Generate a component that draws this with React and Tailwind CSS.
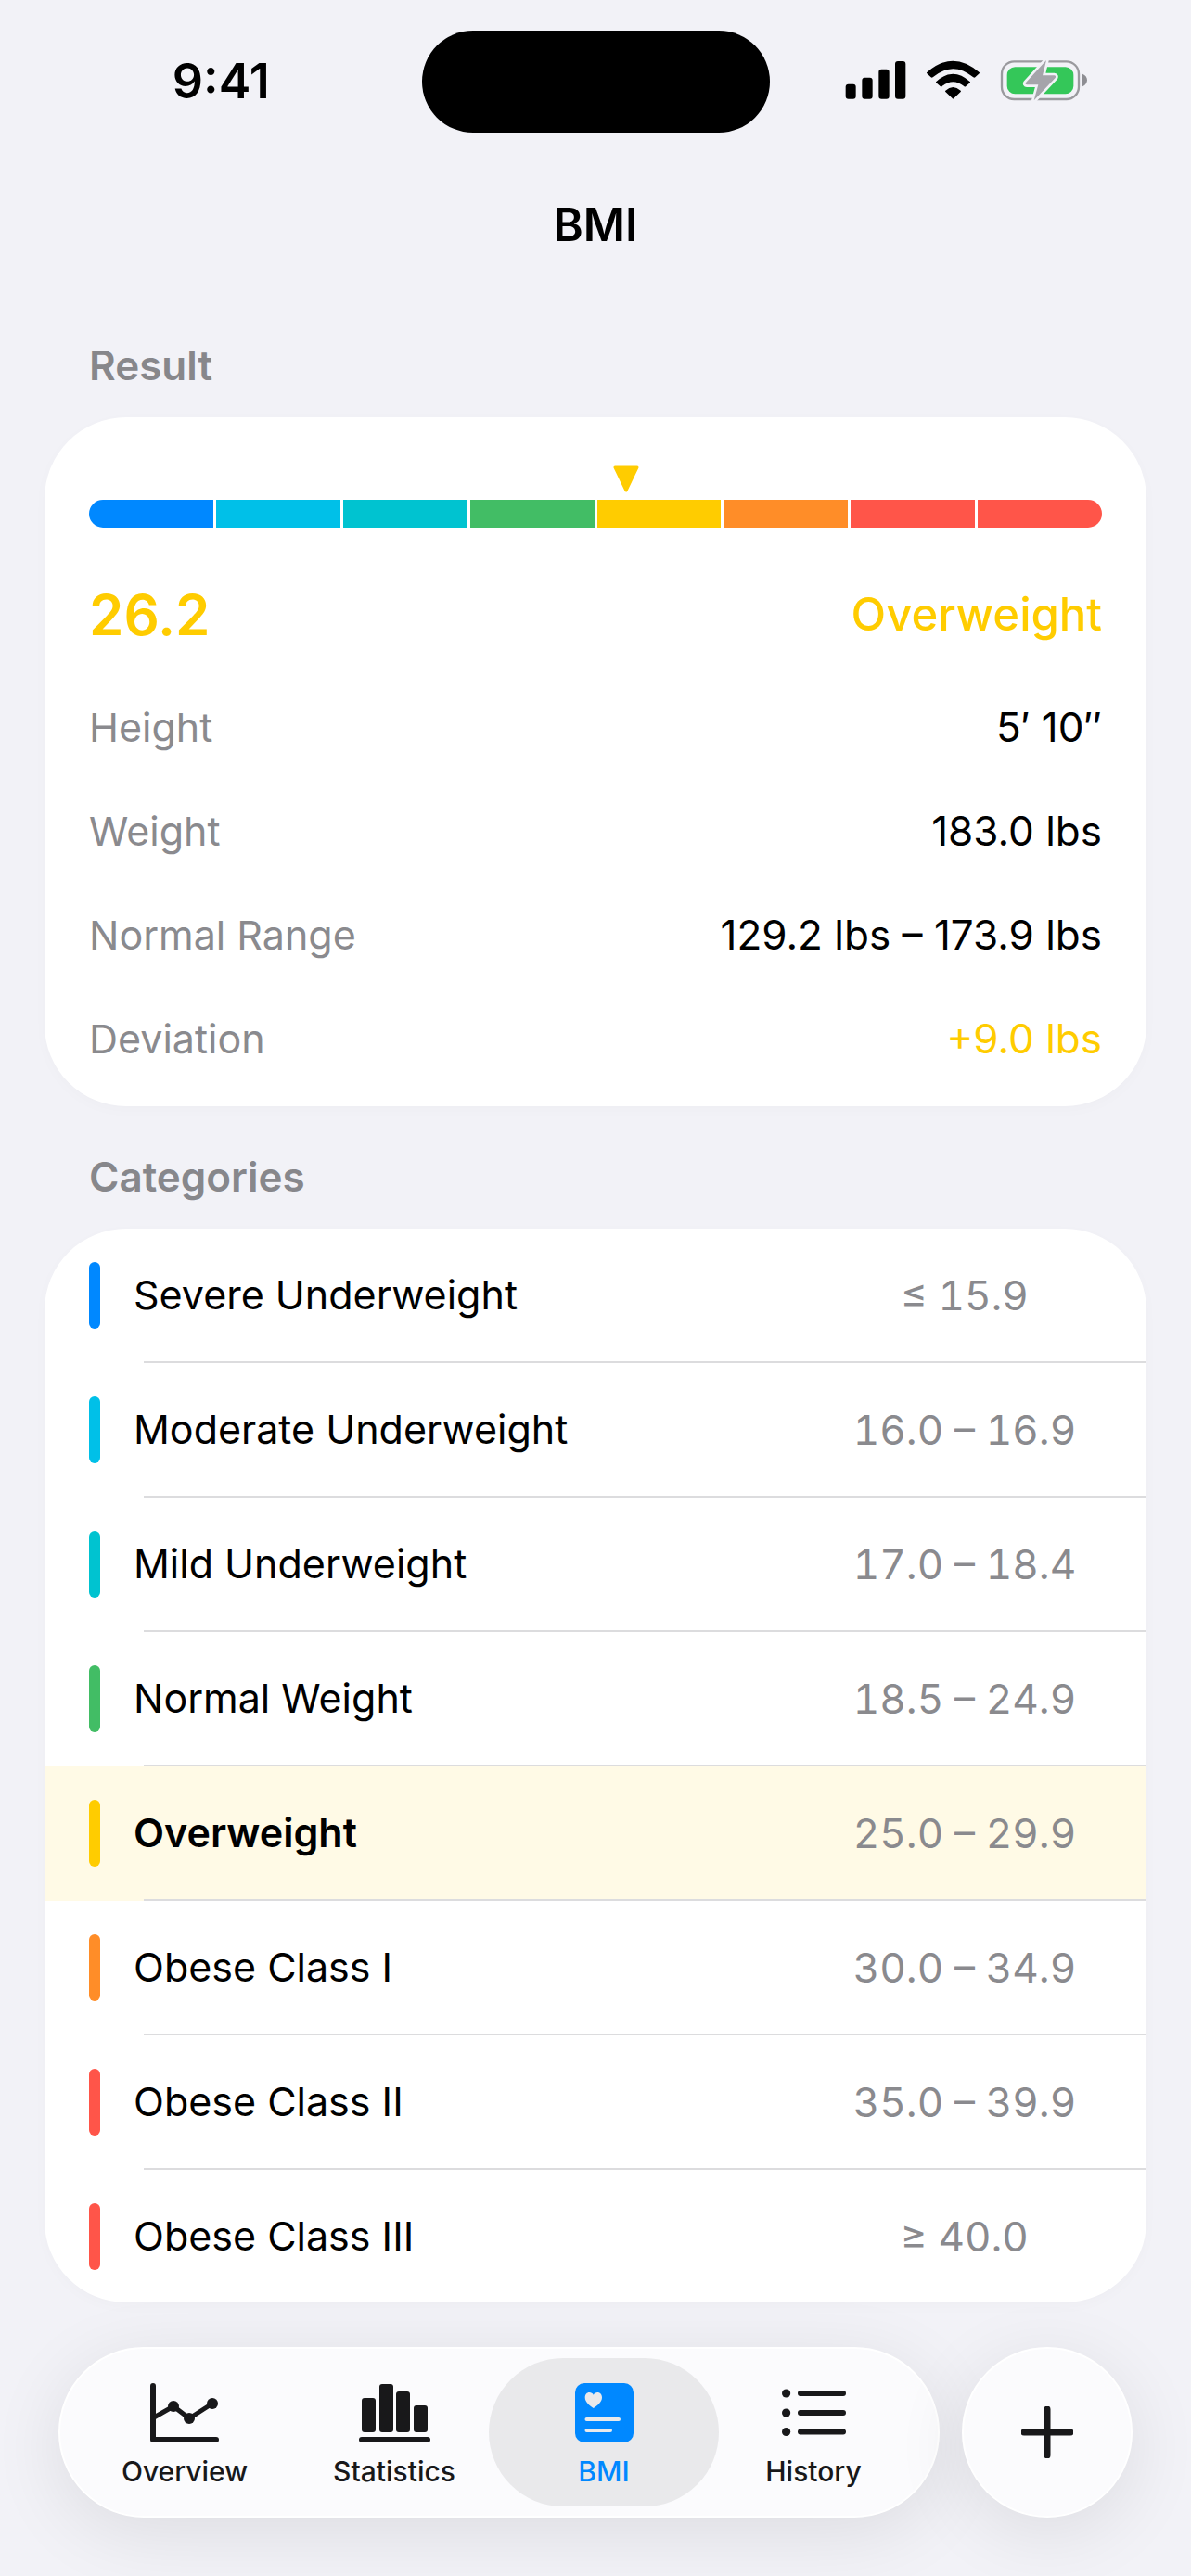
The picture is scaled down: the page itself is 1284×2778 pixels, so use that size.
import React, { useState } from 'react';

const BMI = 26.2;

const CATEGORIES = [
  { name: 'Severe Underweight', range: '≤ 15.9', color: 'bg-[#0088ff]' },
  { name: 'Moderate Underweight', range: '16.0 – 16.9', min: 16, max: 16.9, color: 'bg-[#00c0e8]' },
  { name: 'Mild Underweight', range: '17.0 – 18.4', min: 17, max: 18.4, color: 'bg-[#00c3d0]' },
  { name: 'Normal Weight', range: '18.5 – 24.9', min: 18.5, max: 24.9, color: 'bg-[#42bd65]' },
  { name: 'Overweight', range: '25.0 – 29.9', min: 25, max: 29.9, color: 'bg-[#ffcc00]' },
  { name: 'Obese Class I', range: '30.0 – 34.9', min: 30, max: 34.9, color: 'bg-[#ff8d28]' },
  { name: 'Obese Class II', range: '35.0 – 39.9', min: 35, max: 39.9, color: 'bg-[#ff5549]' },
  { name: 'Obese Class III', range: '≥ 40.0', color: 'bg-[#ff5549]' },
];

const DETAILS = [
  { label: 'Height', value: '5′ 10″' },
  { label: 'Weight', value: '183.0 lbs' },
  { label: 'Normal Range', value: '129.2 lbs – 173.9 lbs' },
  { label: 'Deviation', value: '+9.0 lbs', highlight: true },
];

const SignalIcon = () => (
  <svg viewBox="94 70 198 135" className="w-[66px] h-[45px]" aria-hidden="true">
    <rect x="96" y="150" width="33" height="48" rx="9" />
    <rect x="149" y="129" width="34" height="69" rx="9" />
    <rect x="203" y="102" width="34" height="96" rx="9" />
    <rect x="256" y="76" width="34" height="122" rx="9" />
  </svg>
);

const WifiIcon = () => (
  <svg viewBox="354 70 177 135" className="w-[59px] h-[45px]" aria-hidden="true">
    <path d="M358 112 Q442 38 527 112 Q529 114 527 116 L514 128 Q511 130 508 128 Q442 73 377 128 Q374 130 371 128 L358 116 Q356 114 358 112 Z" />
    <path d="M388 142 Q442 92 497 142 Q499 144 497 146 L484 157 Q481 160 478 157 Q442 128 407 157 Q404 160 401 157 L388 146 Q386 144 388 142 Z" />
    <path d="M418 171 Q442 149 467 171 Q469 173 467 175 L445 196 Q442 199 440 196 L418 175 Q416 173 418 171 Z" />
  </svg>
);

const BatteryIcon = () => (
  <svg viewBox="594 70 285 135" className="w-[95px] h-[45px]" aria-hidden="true">
    <rect x="600" y="77" width="249" height="122" rx="40" fill="none" stroke="#9a9a9e" strokeWidth="7" />
    <rect x="617" y="95" width="215" height="87" rx="26" fill="#34c759" />
    <path d="M861 117 Q876 124 876 137 Q876 151 861 158 Z" fill="#8e8e93" />
    <path
      d="M744 73 L678 145 Q674 151 682 152 L718 152 L704 203 L773 130 Q777 123 769 122 L732 122 Z"
      fill="#a5a4aa"
      stroke="#f2f2f7"
      strokeWidth="16"
      strokeLinejoin="round"
    />
    <path d="M744 73 L678 145 Q674 151 682 152 L718 152 L704 203 L773 130 Q777 123 769 122 L732 122 Z" fill="#a5a4aa" />
  </svg>
);

const OverviewIcon = () => (
  <svg viewBox="0 0 74 64" className="w-[74px] h-[64px]" fill="none" stroke="currentColor" aria-hidden="true">
    <path d="M3 3 V61 H71" strokeWidth="6" strokeLinecap="round" strokeLinejoin="round" />
    <path d="M4 37 L25 25 L42 38 L67 22" strokeWidth="5" />
    <g fill="currentColor" stroke="none">
      <circle cx="25" cy="25" r="6" />
      <circle cx="42" cy="38" r="6" />
      <circle cx="67" cy="22" r="6" />
    </g>
  </svg>
);

const StatisticsIcon = () => (
  <svg viewBox="0 0 77 64" className="w-[77px] h-[64px]" fill="currentColor" aria-hidden="true">
    <rect x="3" y="16" width="15" height="37" rx="3" />
    <rect x="22" y="1" width="15" height="52" rx="3" />
    <rect x="40" y="9" width="15" height="44" rx="3" />
    <rect x="59" y="24" width="15" height="29" rx="3" />
    <rect x="0" y="58" width="77" height="6" rx="3" />
  </svg>
);

const BmiIcon = () => (
  <svg viewBox="0 0 63 64" className="w-[63px] h-[64px]" aria-hidden="true">
    <rect width="63" height="64" rx="10" fill="currentColor" />
    <g fill="#e9e9eb">
      <path d="M19.8 27 C15 24 10.7 20 10.7 15.5 C10.7 12.2 12.8 10 15.3 10 C17.3 10 19 11 19.8 12.7 C20.6 11 22.3 10 24.3 10 C26.8 10 29 12.2 29 15.5 C29 20 24.6 24 19.8 27 Z" />
      <rect x="10.5" y="37" width="38.5" height="4" rx="2" />
      <rect x="10.5" y="49" width="29.5" height="4" rx="2" />
    </g>
  </svg>
);

const HistoryIcon = () => (
  <svg viewBox="0 0 69 64" className="w-[69px] h-[64px]" aria-hidden="true">
    <g fill="currentColor">
      <circle cx="4.6" cy="11" r="4.6" />
      <circle cx="4.6" cy="32" r="4.6" />
      <circle cx="4.6" cy="52.5" r="4.6" />
    </g>
    <path d="M20 11 H66 M20 32 H66 M20 52.5 H66" stroke="currentColor" strokeWidth="6" strokeLinecap="round" />
  </svg>
);

const TABS = [
  { name: 'Overview', Icon: OverviewIcon },
  { name: 'Statistics', Icon: StatisticsIcon },
  { name: 'BMI', Icon: BmiIcon },
  { name: 'History', Icon: HistoryIcon },
];

const StatusBar = () => (
  <div className="grid grid-cols-[1fr_375px_1fr] pt-[33px]">
    <div className="flex items-center justify-center pl-[22px] text-[52px] leading-[60px] font-semibold">9:41</div>
    <div className="h-[110px] rounded-full bg-black"></div>
    <div className="flex items-center justify-center gap-[21px] pr-[30px] pb-1">
      <SignalIcon />
      <WifiIcon />
      <BatteryIcon />
    </div>
  </div>
);

const SectionTitle = ({ children }) => (
  <h2 className="px-12 pb-[26px] text-[44px] leading-[60px] font-semibold text-[#87878b]">{children}</h2>
);

const Scale = () => {
  const current = CATEGORIES.findIndex((c) => BMI >= c.min && BMI <= c.max);
  const { min, max } = CATEGORIES[current];
  const position = ((current + (BMI - min) / (max - min)) / CATEGORIES.length) * 100;

  return (
    <div>
      <svg
        viewBox="0 0 28 29"
        className="w-[28px] h-[29px] -translate-x-1/2"
        style={{ marginLeft: `${position}%` }}
        aria-hidden="true"
      >
        <path d="M2 2 H26 L14 27 Z" fill="#ffcc00" stroke="#ffcc00" strokeWidth="3" strokeLinejoin="round" />
      </svg>
      <div className="mt-2 flex h-[30px] gap-[3px] overflow-hidden rounded-full">
        {CATEGORIES.map((category) => (
          <div key={category.name} className={`flex-1 ${category.color}`}></div>
        ))}
      </div>
    </div>
  );
};

const ResultCard = () => (
  <div className="rounded-[88px] bg-white px-12 pt-[52px] pb-[17px] shadow-[0_4px_16px_rgba(0,0,0,0.02)]">
    <Scale />
    <div className="mt-[29px] flex h-[130px] items-center justify-between text-[#ffcc00]">
      <span className="text-[60px] font-semibold">26.2</span>
      <span className="text-[49px] font-medium">Overweight</span>
    </div>
    <dl>
      {DETAILS.map((item) => (
        <div key={item.label} className="flex h-28 items-center justify-between">
          <dt className="text-[43px] text-[#8a8a8e]">{item.label}</dt>
          <dd className={`text-[44px] ${item.highlight ? 'text-[#ffcc00]' : 'text-black'}`}>{item.value}</dd>
        </div>
      ))}
    </dl>
  </div>
);

const CategoriesCard = () => (
  <ul className="overflow-hidden rounded-[88px] bg-white shadow-[0_4px_16px_rgba(0,0,0,0.02)]">
    {CATEGORIES.map((category, index) => {
      const active = BMI >= category.min && BMI <= category.max;
      return (
        <li key={category.name} className={active ? 'bg-[#fffae6]' : ''}>
          <div className="flex h-[143px] items-center px-12">
            <span className={`h-[72px] w-3 rounded-full ${category.color}`}></span>
            <span className={`flex-1 pl-9 text-[43px] ${active ? 'font-semibold' : ''}`}>{category.name}</span>
            <span className="w-[296px] text-center text-[44px] tabular-nums text-[#8a8a8e]">{category.range}</span>
          </div>
          {index < CATEGORIES.length - 1 && <div className="ml-[107px] h-[2px] bg-[#dcdcde]"></div>}
        </li>
      );
    })}
  </ul>
);

const TabBar = () => {
  const [active, setActive] = useState('BMI');

  return (
    <div className="mt-auto flex gap-6 px-[63px] pb-[63px]">
      <nav className="flex h-[184px] flex-1 rounded-full border-2 border-white bg-[#fbfbfd] px-[21px] py-[10px] shadow-[0_16px_80px_rgba(0,0,0,0.09)]">
        {TABS.map(({ name, Icon }) => (
          <button
            key={name}
            type="button"
            onClick={() => setActive(name)}
            aria-current={active === name ? 'page' : undefined}
            className={`-mx-[11px] flex flex-1 flex-col items-center gap-[13px] rounded-full pt-[27px] ${
              active === name ? 'bg-[#e9e9eb] text-[#0088ff]' : 'text-[#18181a]'
            }`}
          >
            <Icon />
            <span className="text-[30px] leading-[36px] font-medium">{name}</span>
          </button>
        ))}
      </nav>
      <button
        type="button"
        aria-label="Add measurement"
        className="flex size-[184px] items-center justify-center rounded-full border-2 border-white bg-[#fbfbfd] text-[#18181a] shadow-[0_16px_80px_rgba(0,0,0,0.09)]"
      >
        <svg viewBox="0 0 56 56" className="size-[56px]" aria-hidden="true">
          <path d="M28 3 V53 M3 28 H53" stroke="currentColor" strokeWidth="7" strokeLinecap="round" />
        </svg>
      </button>
    </div>
  );
};

const App = () => {
  return (
    <div className="flex min-h-screen flex-col bg-[#f2f2f7] font-['Inter','Liberation_Sans',sans-serif] text-black">
      <StatusBar />
      <h1 className="mt-[70px] text-center text-[49px] leading-[60px] font-semibold">BMI</h1>
      <main className="px-12 pb-[47px]">
        <section className="mt-[91px]">
          <SectionTitle>Result</SectionTitle>
          <ResultCard />
        </section>
        <section className="mt-[46px]">
          <SectionTitle>Categories</SectionTitle>
          <CategoriesCard />
        </section>
      </main>
      <TabBar />
    </div>
  );
};

export default App;
